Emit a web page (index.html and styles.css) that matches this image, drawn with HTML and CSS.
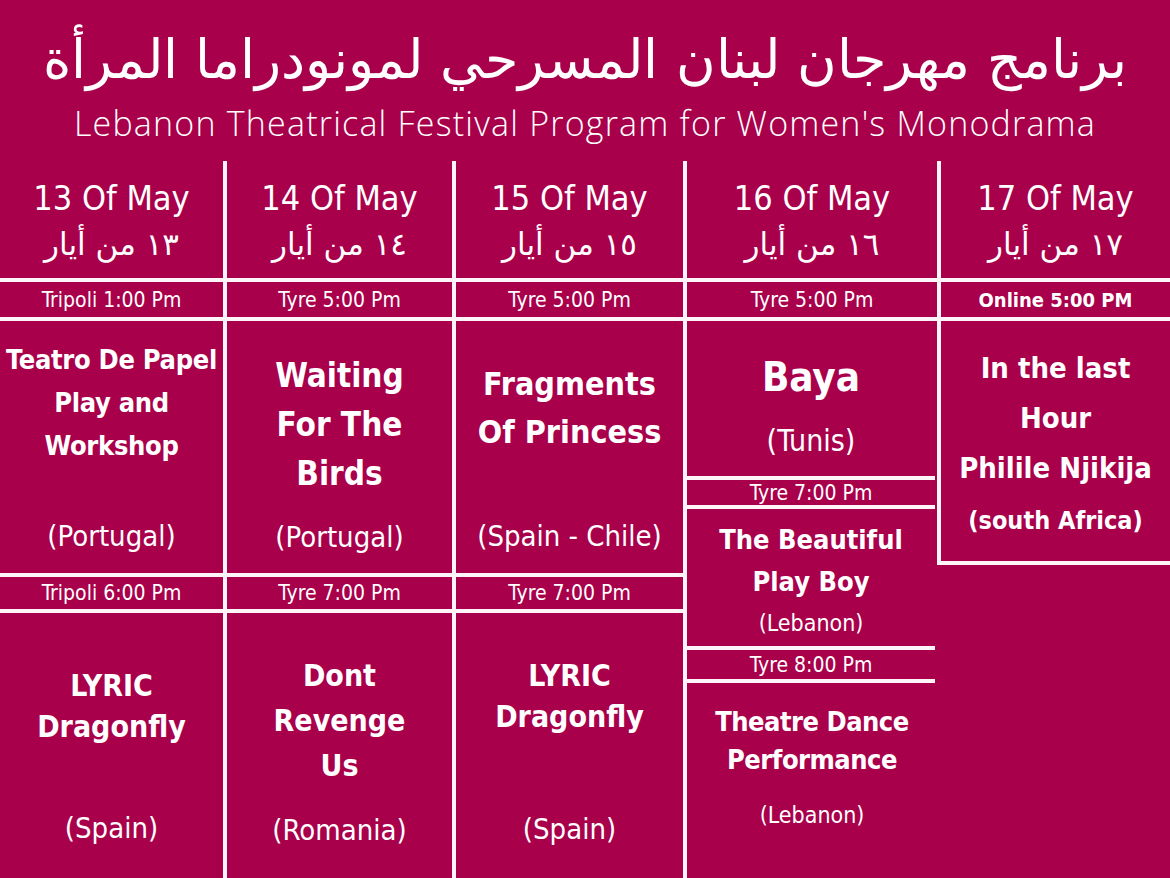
FILE: index.html
```html
<!DOCTYPE html>
<html lang="en">
<head>
<meta charset="utf-8">
<title>Lebanon Theatrical Festival Program for Women's Monodrama</title>
<link rel="stylesheet" href="styles.css">
</head>
<body>
<div class="poster">
  <header class="head">
    <h1 class="title-ar" dir="rtl" lang="ar">برنامج مهرجان لبنان المسرحي لمونودراما المرأة</h1>
    <p class="title-en">Lebanon Theatrical Festival Program for Women's Monodrama</p>
  </header>
  <div class="grid">
    <section class="col c1">
      <div class="day"><span class="day-en">13 Of May</span><span class="day-ar" dir="rtl" lang="ar">١٣ من أيار</span></div>
      <div class="time time-top">Tripoli 1:00 Pm</div>
      <div class="show row-a s1a">
        <div class="name">Teatro De Papel<br>Play and<br>Workshop</div>
        <div class="from">(Portugal)</div>
      </div>
      <div class="time time-mid">Tripoli 6:00 Pm</div>
      <div class="show row-b s1b">
        <div class="name">LYRIC<br>Dragonfly</div>
        <div class="from">(Spain)</div>
      </div>
    </section>
    <section class="col c2">
      <div class="day"><span class="day-en">14 Of May</span><span class="day-ar" dir="rtl" lang="ar">١٤ من أيار</span></div>
      <div class="time time-top">Tyre 5:00 Pm</div>
      <div class="show row-a s2a">
        <div class="name">Waiting<br>For The<br>Birds</div>
        <div class="from">(Portugal)</div>
      </div>
      <div class="time time-mid">Tyre 7:00 Pm</div>
      <div class="show row-b s2b">
        <div class="name">Dont<br>Revenge<br>Us</div>
        <div class="from">(Romania)</div>
      </div>
    </section>
    <section class="col c3">
      <div class="day"><span class="day-en">15 Of May</span><span class="day-ar" dir="rtl" lang="ar">١٥ من أيار</span></div>
      <div class="time time-top">Tyre 5:00 Pm</div>
      <div class="show row-a s3a">
        <div class="name">Fragments<br>Of Princess</div>
        <div class="from">(Spain - Chile)</div>
      </div>
      <div class="time time-mid">Tyre 7:00 Pm</div>
      <div class="show row-b s3b">
        <div class="name">LYRIC<br>Dragonfly</div>
        <div class="from">(Spain)</div>
      </div>
    </section>
    <section class="col c4">
      <div class="day"><span class="day-en">16 Of May</span><span class="day-ar" dir="rtl" lang="ar">١٦ من أيار</span></div>
      <div class="time time-top">Tyre 5:00 Pm</div>
      <div class="show s4a">
        <div class="name">Baya</div>
        <div class="from">(Tunis)</div>
      </div>
      <div class="time time-s4a">Tyre 7:00 Pm</div>
      <div class="show s4b">
        <div class="name">The Beautiful<br>Play Boy</div>
        <div class="from">(Lebanon)</div>
      </div>
      <div class="time time-s4b">Tyre 8:00 Pm</div>
      <div class="show row-b s4c">
        <div class="name">Theatre Dance<br>Performance</div>
        <div class="from">(Lebanon)</div>
      </div>
    </section>
    <section class="col c5">
      <div class="day"><span class="day-en">17 Of May</span><span class="day-ar" dir="rtl" lang="ar">١٧ من أيار</span></div>
      <div class="time time-top time-bold">Online 5:00 PM</div>
      <div class="show s5a">
        <div class="name">In the last<br>Hour<br>Philile Njikija</div>
        <div class="from">(south Africa)</div>
      </div>
    </section>
  </div>
</div>
</body>
</html>
```

FILE: styles.css
```css
* { box-sizing: border-box; margin: 0; padding: 0; }

html, body {
  width: 1170px;
  height: 878px;
  overflow: hidden;
  background: #a9004b;
}

body {
  color: #ffffff;
  font-family: "DejaVu Sans Condensed", "DejaVu Sans", sans-serif;
  font-stretch: condensed;
}

.poster {
  width: 1170px;
  height: 878px;
  display: flex;
  flex-direction: column;
}

/* ---------- heading ---------- */
.head {
  height: 161px;
  display: flex;
  flex-direction: column;
  align-items: center;
  padding-top: 25px;
}

.title-ar {
  font-family: "DejaVu Sans", sans-serif;
  font-stretch: normal;
  font-weight: 300;
  font-size: 54px;
  line-height: 70px;
  white-space: nowrap;
}

.title-en {
  font-family: "Open Sans", "DejaVu Sans", sans-serif;
  font-stretch: normal;
  font-weight: 300;
  font-size: 34px;
  letter-spacing: 1.2px;
  line-height: 40px;
  margin-top: 8px;
  white-space: nowrap;
}

/* ---------- grid ---------- */
.grid {
  flex: 1;
  display: flex;
  align-items: stretch;
}

.col {
  display: flex;
  flex-direction: column;
  border-left: 4px solid #fff4f8;
}
.c1 { width: 223px; border-left: 0; }
.c2 { width: 229px; }
.c3 { width: 231px; }
.c4 { width: 254px; }
.c5 { width: 233px; align-self: flex-start; }

.day {
  height: 121px;
  border-bottom: 4px solid #fff4f8;
  display: flex;
  flex-direction: column;
  align-items: center;
  padding-top: 17px;
}
.day-en {
  font-size: 34px;
  line-height: 40px;
}
.day-ar {
  font-family: "DejaVu Sans", sans-serif;
  font-stretch: normal;
  font-size: 31px;
  line-height: 48px;
  margin-top: 2px;
}

.time {
  border-bottom: 4px solid #fff4f8;
  display: flex;
  align-items: center;
  justify-content: center;
  font-size: 21px;
  white-space: nowrap;
}
.time-top { height: 39px; }
.time-mid { height: 36px; }
.time-s4a { height: 29px; margin-right: 2px; }
.time-s4b { height: 33px; margin-right: 2px; }
.time-bold { font-weight: bold; font-size: 20px; }

.show {
  display: flex;
  flex-direction: column;
  align-items: center;
  text-align: center;
  white-space: nowrap;
}
.name { font-weight: bold; }
.from { font-size: 29px; line-height: 36px; }

.row-a { height: 256px; border-bottom: 4px solid #fff4f8; }
.row-b { flex: 1; }

.s1a { padding-top: 17px; }
.s1a .name { font-size: 27px; line-height: 43px; letter-spacing: -0.3px; }
.s1a .from { margin-top: 51px; }

.s2a { padding-top: 30px; }
.s2a .name { font-size: 33px; line-height: 49px; }
.s2a .from { margin-top: 21px; }

.s3a { padding-top: 39px; }
.s3a .name { font-size: 32px; line-height: 48px; }
.s3a .from { margin-top: 62px; }

.s1b { padding-top: 52px; }
.s1b .name { font-size: 30px; line-height: 41px; }
.s1b .from { margin-top: 63px; }

.s2b { padding-top: 40px; }
.s2b .name { font-size: 30px; line-height: 45px; }
.s2b .from { margin-top: 24px; }

.s3b { padding-top: 42px; }
.s3b .name { font-size: 30px; line-height: 41px; }
.s3b .from { margin-top: 74px; }

.s4a { height: 159px; border-bottom: 4px solid #fff4f8; margin-right: 2px; padding-top: 31px; }
.s4a .name { font-size: 40px; line-height: 50px; }
.s4a .from { font-size: 30px; margin-top: 21px; }

.s4b { height: 141px; border-bottom: 4px solid #fff4f8; margin-right: 2px; padding-top: 10px; }
.s4b .name { font-size: 27px; line-height: 42px; }
.s4b .from { font-size: 23px; line-height: 28px; margin-top: 6px; }

.s4c { padding-top: 20px; }
.s4c .name { font-size: 27px; line-height: 38px; letter-spacing: -0.5px; }
.s4c .from { font-size: 23px; line-height: 28px; margin-top: 22px; }

.s5a { height: 244px; border-bottom: 4px solid #fff4f8; padding-top: 22px; }
.s5a .name { font-size: 29px; line-height: 50px; }
.s5a .from { font-size: 25px; line-height: 36px; margin-top: 10px; font-weight: bold; }
```
